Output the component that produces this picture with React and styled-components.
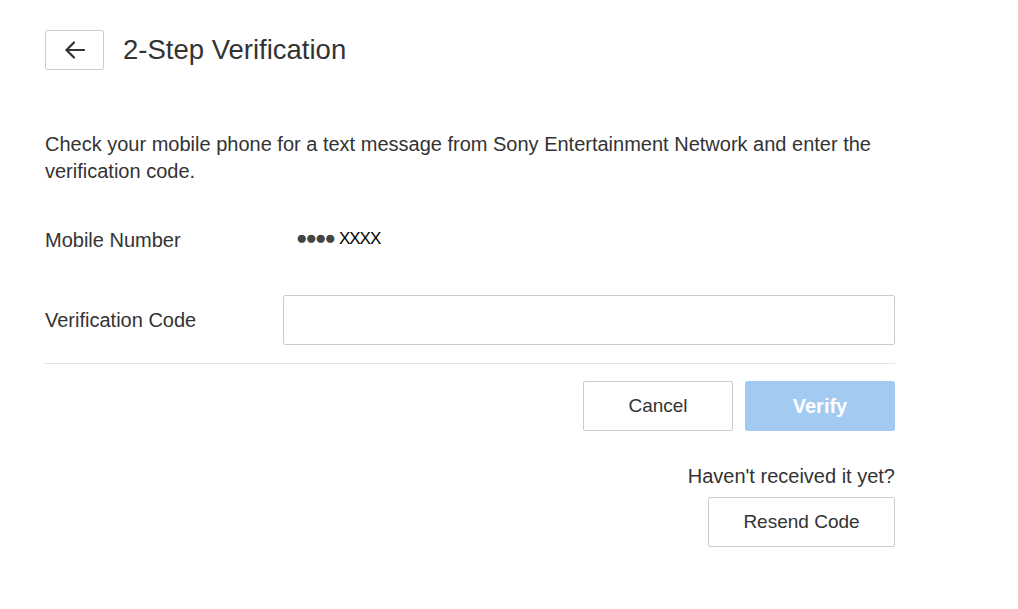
import React from 'react';
import styled, { createGlobalStyle } from 'styled-components';

const GlobalStyle = createGlobalStyle`
  html, body {
    margin: 0;
    padding: 0;
    background: #fff;
  }
  body {
    font-family: 'Liberation Sans', Arial, sans-serif;
    color: #333;
  }
  * { box-sizing: border-box; }
`;

const Page = styled.div`
  width: 850px;
  margin-left: 45px;
  padding-top: 30px;
`;

const Header = styled.header`
  display: flex;
  align-items: center;
  gap: 19px;
  height: 40px;
`;

const BackButton = styled.button`
  width: 59px;
  height: 40px;
  border: 1px solid #ccc;
  border-radius: 2px;
  background: #fff;
  display: flex;
  align-items: center;
  justify-content: center;
  padding: 0;
  color: #333;
  cursor: pointer;
`;

const Title = styled.h1`
  margin: 0;
  font-size: 27.5px;
  font-weight: 400;
  color: #333;
`;

const Intro = styled.p`
  margin: 61px 0 30px;
  font-size: 20px;
  line-height: 27px;
  color: #333;
`;

const Row = styled.div`
  display: grid;
  grid-template-columns: 238px 1fr;
  align-items: center;
  height: 50px;
  margin-bottom: ${p => p.$gap || 0}px;
`;

const Label = styled.div`
  font-size: 20px;
  color: #333;
`;

const Value = styled.div`
  padding-left: 13px;
  display: flex;
  align-items: baseline;
  gap: 5px;
  margin-top: -4px;
`;

const Dots = styled.span`
  font-size: 19px;
  color: #444;
  letter-spacing: -2px;
`;

const Masked = styled.span`
  font-size: 17px;
  color: #000;
  letter-spacing: -1px;
`;

const CodeInput = styled.input`
  height: 50px;
  width: 100%;
  border: 1px solid #ccc;
  border-radius: 2px;
  padding: 0 12px;
  font-size: 18px;
  font-family: inherit;
  outline: none;
`;

const Divider = styled.hr`
  border: 0;
  border-top: 1px solid #e3e3e3;
  margin: 18px 0 17px;
`;

const Actions = styled.div`
  display: flex;
  justify-content: flex-end;
  gap: 12px;
`;

const Button = styled.button`
  height: 50px;
  width: ${p => p.$width || 150}px;
  border-radius: 2px;
  font-family: 'Liberation Sans', Arial, sans-serif;
  font-size: ${p => (p.$primary ? 20 : 19)}px;
  cursor: pointer;
  border: 1px solid ${p => (p.$primary ? '#a3cbf2' : '#ccc')};
  background: ${p => (p.$primary ? '#a3cbf2' : '#fff')};
  color: ${p => (p.$primary ? '#fff' : '#333')};
  font-weight: ${p => (p.$primary ? 700 : 400)};
`;

const Resend = styled.div`
  display: flex;
  flex-direction: column;
  align-items: flex-end;
  margin-top: 33px;
  gap: 9px;
`;

const Hint = styled.div`
  font-size: 20px;
  line-height: 24px;
  color: #333;
`;

const ArrowIcon = () => (
  <svg width="24" height="24" viewBox="0 0 24 24" fill="none" stroke="#333" strokeWidth="2.2" strokeLinecap="round" strokeLinejoin="round">
    <path d="M21 12H3.5" />
    <path d="M11 4.5 3.5 12l7.5 7.5" />
  </svg>
);

export default function App() {
  return (
    <>
      <GlobalStyle />
      <Page>
        <Header>
          <BackButton aria-label="Back">
            <ArrowIcon />
          </BackButton>
          <Title>2-Step Verification</Title>
        </Header>
        <Intro>
          Check your mobile phone for a text message from Sony Entertainment Network and enter the verification code.
        </Intro>
        <Row $gap={30}>
          <Label>Mobile Number</Label>
          <Value>
            <Dots>●●●●</Dots>
            <Masked>XXXX</Masked>
          </Value>
        </Row>
        <Row>
          <Label>Verification Code</Label>
          <CodeInput type="text" />
        </Row>
        <Divider />
        <Actions>
          <Button>Cancel</Button>
          <Button $primary disabled>Verify</Button>
        </Actions>
        <Resend>
          <Hint>Haven't received it yet?</Hint>
          <Button $width={187}>Resend Code</Button>
        </Resend>
      </Page>
    </>
  );
}
